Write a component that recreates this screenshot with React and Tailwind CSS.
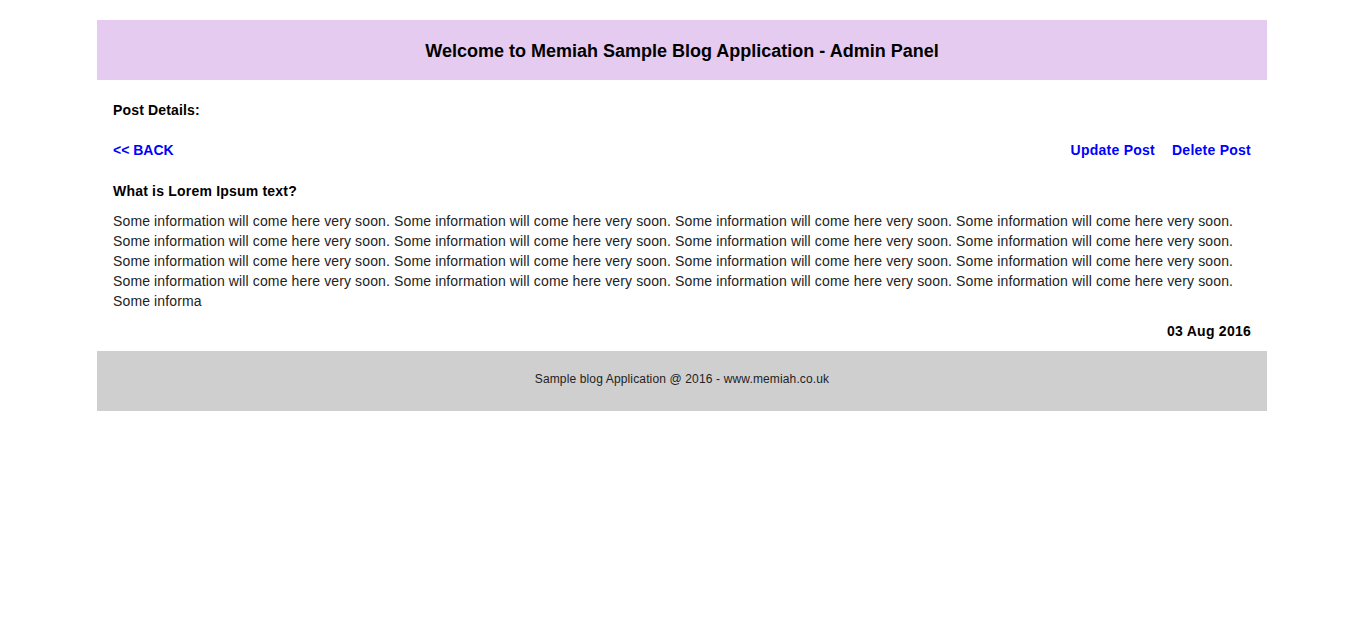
export default function App() {
  const sentence = 'Some information will come here very soon. ';
  const body = sentence.repeat(16) + 'Some informa';

  return (
    <div className="min-h-screen bg-white font-['Liberation_Sans',Arial,sans-serif] pt-5">
      <div className="ml-[97px] w-[1170px]">
        <header className="h-[60px] bg-[#e6cbf0] flex items-center justify-center pt-0.5">
          <h1 className="text-[18px] font-bold text-black">
            Welcome to Memiah Sample Blog Application - Admin Panel
          </h1>
        </header>

        <main className="px-4 pt-5 text-[14px] leading-5">
          <h2 className="font-bold text-black tracking-[0.15px]">Post Details:</h2>

          <div className="mt-5 flex justify-between font-bold text-[#0000ff]">
            <a href="#">&lt;&lt; BACK</a>
            <div className="flex gap-[17px] tracking-[0.25px]">
              <a href="#">Update Post</a>
              <a href="#">Delete Post</a>
            </div>
          </div>

          <h3 className="mt-[21px] font-bold text-black tracking-[0.2px]">What is Lorem Ipsum text?</h3>
          <p className="mt-2.5 text-[#222] tracking-[0.13px]">{body}</p>
          <div className="mt-2.5 text-right font-bold text-black tracking-[0.25px]">03 Aug 2016</div>
        </main>

        <footer className="mt-2.5 h-[60px] bg-[#cfcfcf] flex items-center justify-center pb-1 text-[12px] text-[#222] tracking-[0.14px]">
          Sample blog Application @ 2016 - www.memiah.co.uk
        </footer>
      </div>
    </div>
  );
}
